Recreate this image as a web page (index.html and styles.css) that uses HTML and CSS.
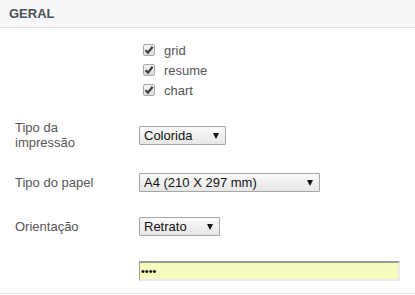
FILE: index.html
```html
<!DOCTYPE html>
<html lang="pt">
<head>
    <meta charset="UTF-8">
    <title>Geral</title>
    <link rel="stylesheet" href="styles.css">
</head>
<body>
    <section class="panel">
        <div class="panel-header">GERAL</div>
        <div class="panel-body">
            <div class="form-row checks-row">
                <div class="form-label"></div>
                <div class="form-control checks">
                    <label class="check-item">
                        <span class="check-box"><svg width="10" height="10" viewBox="0 0 10 10"><path d="M1.5 5.2 L4 7.6 L8.6 1.8" fill="none" stroke="#3d3d3d" stroke-width="2.2"/></svg></span>
                        grid
                    </label>
                    <label class="check-item">
                        <span class="check-box"><svg width="10" height="10" viewBox="0 0 10 10"><path d="M1.5 5.2 L4 7.6 L8.6 1.8" fill="none" stroke="#3d3d3d" stroke-width="2.2"/></svg></span>
                        resume
                    </label>
                    <label class="check-item">
                        <span class="check-box"><svg width="10" height="10" viewBox="0 0 10 10"><path d="M1.5 5.2 L4 7.6 L8.6 1.8" fill="none" stroke="#3d3d3d" stroke-width="2.2"/></svg></span>
                        chart
                    </label>
                </div>
            </div>

            <div class="form-row label-2lines">
                <div class="form-label">Tipo da<br>impressão</div>
                <div class="form-control">
                    <div class="select select-color">Colorida</div>
                </div>
            </div>

            <div class="form-row">
                <div class="form-label">Tipo do papel</div>
                <div class="form-control">
                    <div class="select select-paper">A4 (210 X 297 mm)</div>
                </div>
            </div>

            <div class="form-row">
                <div class="form-label">Orientação</div>
                <div class="form-control">
                    <div class="select select-orient">Retrato</div>
                </div>
            </div>

            <div class="form-row input-row">
                <div class="form-label"></div>
                <div class="form-control">
                    <input class="pass-input" type="password" value="1234" aria-label="Senha">
                </div>
            </div>
        </div>
    </section>
</body>
</html>
```

FILE: styles.css
```css
/* CSS */
body {
    margin: 0;
    font-family: 'Liberation Sans', Arial, sans-serif;
    font-size: 13px;
    color: #555555;
    background: #FFFFFF;
}

.panel-header {
    height: 27px;
    line-height: 28px;
    padding-left: 9px;
    background-color: #F7F8FA;
    border-bottom: 1px solid #DEE1E5;
    font-weight: bold;
    color: #495057;
}

.panel-body {
    border-bottom: 1px solid #E3E4E6;
}

.form-row {
    display: grid;
    grid-template-columns: 124px 1fr;
    align-items: center;
    padding: 12px 0 13px 15px;
}

.label-2lines {
    padding: 11px 0 11px 15px;
}

.checks-row {
    padding: 12px 0 9px 15px;
}

.input-row {
    padding: 12px 0 12px 15px;
}

.form-label {
    line-height: 15px;
}

.checks {
    display: flex;
    flex-direction: column;
    padding-left: 4px;
}

.check-item {
    display: flex;
    align-items: center;
    height: 20px;
    gap: 9px;
}

.check-box {
    width: 10px;
    height: 10px;
    border: 1px solid #A8A8A8;
    border-radius: 2px;
    background: linear-gradient(#F4F4F4, #DCDCDC);
    display: flex;
    align-items: center;
    justify-content: center;
}

.select {
    position: relative;
    box-sizing: border-box;
    height: 19px;
    line-height: 17px;
    padding-left: 4px;
    border: 1px solid #A6A6A6;
    border-radius: 1px;
    background: linear-gradient(#FAFAFA, #E6E6E6);
    color: #111111;
}

.select::after {
    content: "";
    position: absolute;
    right: 6px;
    top: 6px;
    border-left: 3px solid transparent;
    border-right: 3px solid transparent;
    border-top: 6px solid #111111;
}

.select-color {
    width: 87px;
}

.select-paper {
    width: 181px;
}

.select-orient {
    width: 81px;
}

.pass-input {
    display: block;
    box-sizing: border-box;
    width: 261px;
    height: 20px;
    margin: 0;
    padding: 0 1px;
    background-color: #F8FBBE;
    border-style: solid;
    border-width: 2px 2px 2px 1px;
    border-color: #9C9C9C #EBEBEB #EBEBEB #9C9C9C;
    font-family: 'Liberation Sans', Arial, sans-serif;
    font-size: 11px;
    color: #000000;
    outline: none;
}
```
